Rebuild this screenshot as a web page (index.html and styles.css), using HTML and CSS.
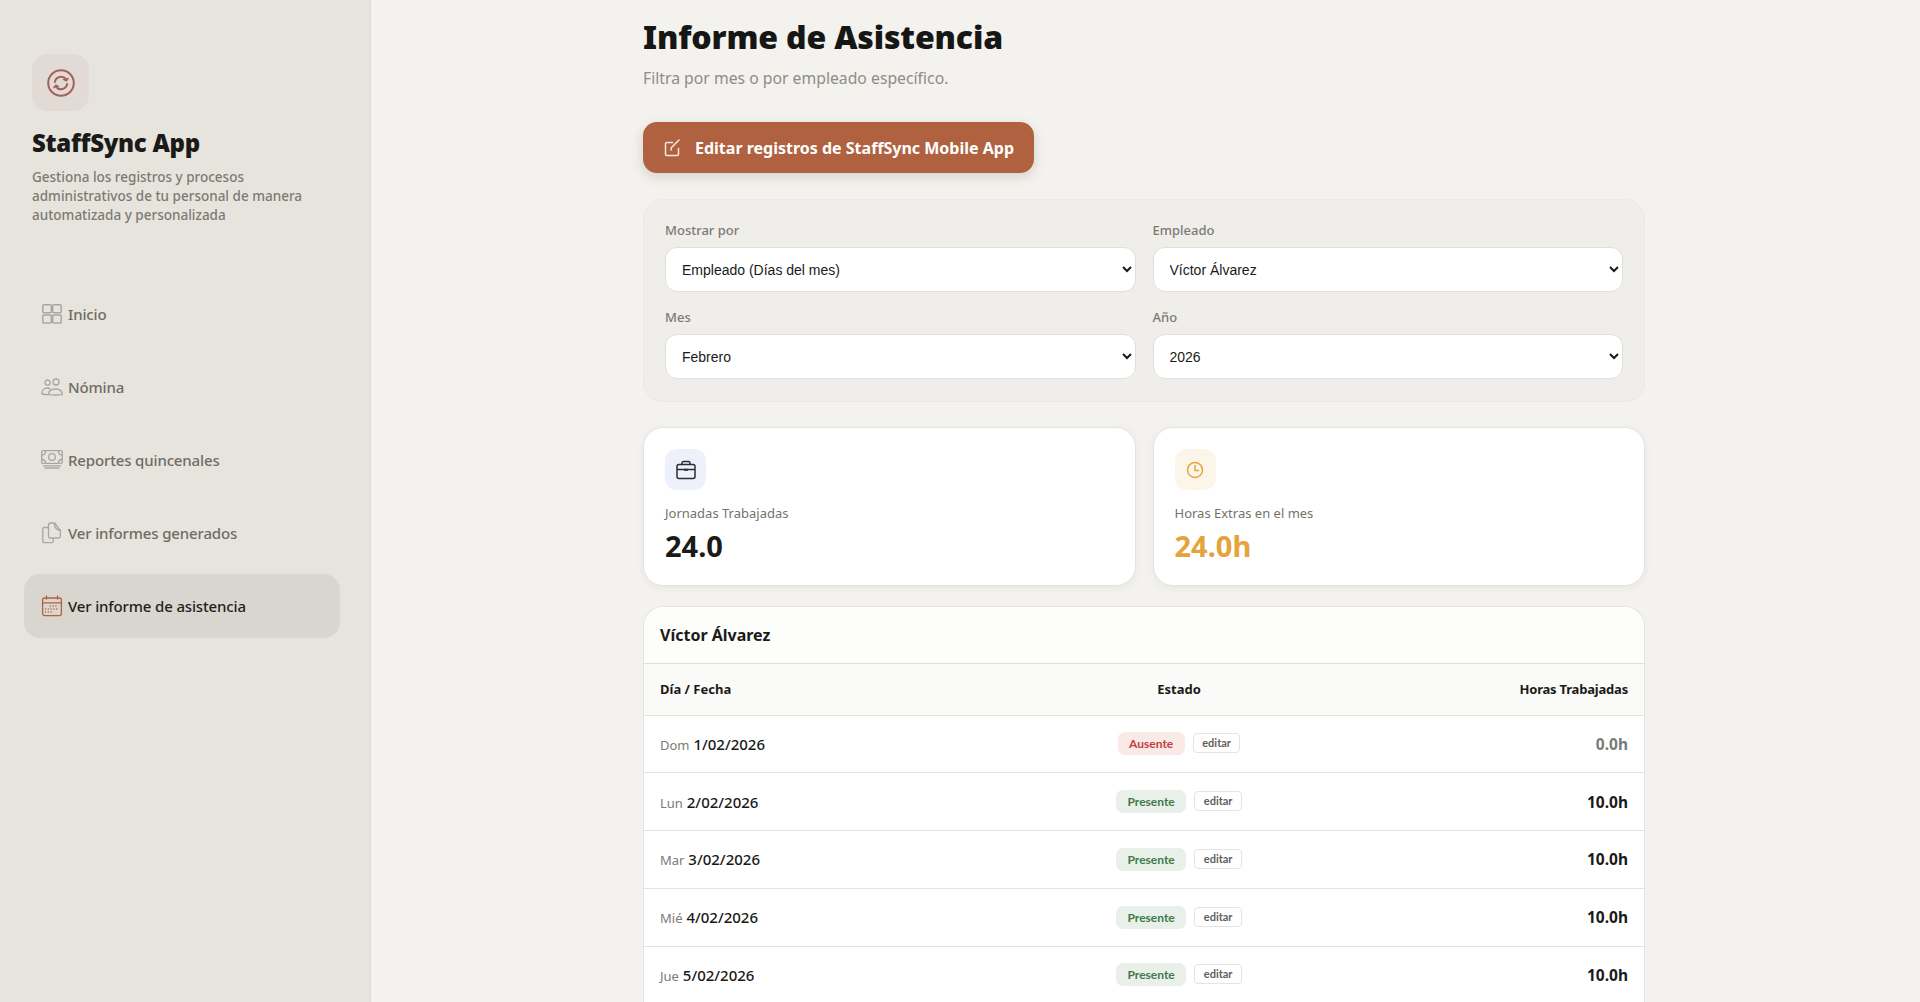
FILE: index.html
```html
<!DOCTYPE html>
<html lang="es">
<head>
<meta charset="utf-8">
<title>Informe de Asistencia</title>
<link rel="stylesheet" href="styles.css">
</head>
<body>
<div class="app">
  <aside class="sidebar">
    <div class="logo">
      <svg width="30" height="30" viewBox="0 0 30 30" fill="none" stroke="#a5605c" stroke-width="2" stroke-linecap="round" stroke-linejoin="round"><circle cx="15" cy="15" r="12.8"/><path d="M8.8 14a6.4 6.4 0 0 1 11.4-2.600"/><path d="M21.200 16a6.400 6.400 0 0 1-11.400 2.600"/><path d="M22 10.500l-1.800 2.300-2.600-1.400" stroke-width="1.600"/><path d="M8 19.500l1.800-2.300 2.600 1.400" stroke-width="1.600"/></svg>
    </div>
    <h2 class="brand">StaffSync App</h2>
    <p class="tagline">Gestiona los registros y procesos administrativos de tu personal de manera automatizada y personalizada</p>
    <nav class="nav">
      <a class="nav-item">
        <svg class="nav-icon" viewBox="0 0 22 22" fill="none" stroke="#a9a69f" stroke-width="1.500"><rect x="1.800" y="1.800" width="8.500" height="8" rx="1"/><rect x="11.700" y="1.800" width="8.500" height="8" rx="1"/><rect x="1.800" y="12" width="8.500" height="8" rx="1"/><rect x="11.700" y="12" width="8.500" height="8" rx="1"/></svg>
        <span>Inicio</span>
      </a>
      <a class="nav-item">
        <svg class="nav-icon" viewBox="0 0 22 22" fill="none" stroke="#a9a69f" stroke-width="1.300"><circle cx="6.600" cy="6.600" r="2.600"/><circle cx="15" cy="6" r="3"/><path d="M.8 18c0-3.600 2.400-6 5.400-6 1.200 0 2.200.3 3 .9"/><path d="M7.600 18.600c0-3.600 3-5.600 7-5.600s6.600 2 6.600 5.600c-4.400.5-9.200.5-13.600 0z"/><path d="M.8 18c1.800.5 4 .6 6.200.6"/></svg>
        <span>Nómina</span>
      </a>
      <a class="nav-item">
        <svg class="nav-icon" viewBox="0 0 22 22" fill="none" stroke="#a9a69f" stroke-width="1.300"><rect x=".7" y="1.700" width="20.600" height="12.600" rx="1.200"/><circle cx="11" cy="8" r="3.400"/><path d="M1 6c2 0 3.500-1.600 3.600-4M21 6c-2 0-3.500-1.600-3.600-4M1 10.500c2 0 3.500 1.500 3.600 3.500M21 10.500c-2 0-3.500 1.500-3.600 3.500"/><path d="M2 16.800h18M3.500 19h15"/></svg>
        <span>Reportes quincenales</span>
      </a>
      <a class="nav-item">
        <svg class="nav-icon" viewBox="0 0 22 22" fill="none" stroke="#a9a69f" stroke-width="1.300" stroke-linejoin="round"><path d="M7.500 5.500H3.200c-.8 0-1.400.6-1.400 1.400v12.400c0 .8.600 1.400 1.400 1.400h7.600c.8 0 1.400-.6 1.400-1.400V16"/><path d="M7.500 3v11.600c0 .8.600 1.400 1.400 1.400h9c.8 0 1.400-.6 1.400-1.400V8.500L13.500 1H9.500c-1 0-2 1-2 2z"/><path d="M13.500 1c-.4 3 .6 6.500 5.800 7.500"/></svg>
        <span>Ver informes generados</span>
      </a>
      <a class="nav-item active">
        <svg class="nav-icon" viewBox="0 0 22 22" fill="none" stroke="#b06240" stroke-width="1.300" stroke-linecap="round"><rect x="1.600" y="3" width="18.800" height="17.600" rx="2"/><path d="M1.600 7.800h18.800M5.500 1v3M16.500 1v3"/><path stroke-width="1.500" stroke-dasharray="0 2.800" d="M9.300 11h8M4.500 14h13M4.500 17h8"/></svg>
        <span>Ver informe de asistencia</span>
      </a>
    </nav>
  </aside>
  <main class="main">
    <div class="content">
      <h1 class="title">Informe de Asistencia</h1>
      <p class="subtitle">Filtra por mes o por empleado específico.</p>
      <a class="edit-btn">
        <svg width="18" height="18" viewBox="0 0 18 18" fill="none" stroke="#fff" stroke-opacity=".85" stroke-width="1.500" stroke-linecap="round" stroke-linejoin="round"><path d="M8.500 3.500H2.800C2 3.500 1.500 4 1.500 4.800v10.400c0 .8.500 1.300 1.300 1.300h10.400c.8 0 1.300-.5 1.300-1.300V9.500"/><path d="M7 11l.5-2.500L15 1"/></svg>
        <span>Editar registros de StaffSync Mobile App</span>
      </a>
      <section class="filters">
        <label class="field"><span class="field-label">Mostrar por</span>
          <select class="field-select"><option>Empleado (Días del mes)</option></select></label>
        <label class="field"><span class="field-label">Empleado</span>
          <select class="field-select"><option>Víctor Álvarez</option></select></label>
        <label class="field"><span class="field-label">Mes</span>
          <select class="field-select"><option>Febrero</option></select></label>
        <label class="field"><span class="field-label">Año</span>
          <select class="field-select"><option>2026</option></select></label>
      </section>
      <section class="stats">
        <div class="stat">
          <div class="stat-icon blue">
            <svg width="22" height="22" viewBox="0 0 22 22" fill="none" stroke="#2b2b33" stroke-width="1.500" stroke-linejoin="round"><rect x="2" y="5.500" width="18" height="14" rx="2"/><path d="M7 5.500V4c0-1 .6-1.600 1.600-1.600h4.800c1 0 1.600.6 1.600 1.600v1.500"/><path d="M2 10.500h18"/><path d="M9 10.800h4" stroke-width="2"/></svg>
          </div>
          <div class="stat-label">Jornadas Trabajadas</div>
          <div class="stat-value">24.0</div>
        </div>
        <div class="stat">
          <div class="stat-icon amber">
            <svg width="20" height="20" viewBox="0 0 20 20" fill="none" stroke="#e5a33b" stroke-width="1.500" stroke-linecap="round" stroke-linejoin="round"><circle cx="10" cy="10" r="7.500"/><path d="M10 5.500V10.500h3.500"/></svg>
          </div>
          <div class="stat-label">Horas Extras en el mes</div>
          <div class="stat-value amber-text">24.0h</div>
        </div>
      </section>
      <section class="report">
        <h3 class="report-title">Víctor Álvarez</h3>
        <table class="report-table">
          <thead>
            <tr><th class="col-day">Día / Fecha</th><th class="col-state">Estado</th><th class="col-hours">Horas Trabajadas</th></tr>
          </thead>
          <tbody>
            <tr><td class="col-day"><span class="dow">Dom</span> 1/02/2026</td><td class="col-state"><span class="badge absent">Ausente</span><span class="edit-tag">editar</span></td><td class="col-hours zero">0.0h</td></tr>
            <tr><td class="col-day"><span class="dow">Lun</span> 2/02/2026</td><td class="col-state"><span class="badge present">Presente</span><span class="edit-tag">editar</span></td><td class="col-hours">10.0h</td></tr>
            <tr><td class="col-day"><span class="dow">Mar</span> 3/02/2026</td><td class="col-state"><span class="badge present">Presente</span><span class="edit-tag">editar</span></td><td class="col-hours">10.0h</td></tr>
            <tr><td class="col-day"><span class="dow">Mié</span> 4/02/2026</td><td class="col-state"><span class="badge present">Presente</span><span class="edit-tag">editar</span></td><td class="col-hours">10.0h</td></tr>
            <tr><td class="col-day"><span class="dow">Jue</span> 5/02/2026</td><td class="col-state"><span class="badge present">Presente</span><span class="edit-tag">editar</span></td><td class="col-hours">10.0h</td></tr>
          </tbody>
        </table>
      </section>
    </div>
  </main>
</div>
</body>
</html>
```
FILE: styles.css
```css
* { box-sizing: border-box; }
html, body { margin: 0; height: 100%; overflow: hidden; }
body { font-family: "Noto Sans", "Open Sans", sans-serif; color: #1a1a18; background: #f3f2ee; }
.app { display: flex; height: 1002px; }

.sidebar { width: 371px; flex: none; background: #e7e4dd; border-right: 1px solid #dedbd4; padding: 54px 30px 0 24px; }
.logo { width: 57px; height: 57px; margin-left: 8px; border-radius: 16px; background: #e2dad5; display: flex; align-items: center; justify-content: center; }
.brand { margin: 16px 0 0 8px; font-size: 24px; line-height: 32px; font-weight: 900; letter-spacing: -.3px; color: #1a1a18; }
.tagline { margin: 9px 0 0 8px; width: 290px; font-size: 13.5px; line-height: 19px; font-weight: 500; color: #7d7a73; }
.nav { margin-top: 57px; display: flex; flex-direction: column; gap: 9px; }
.nav-item { height: 64px; display: flex; align-items: center; gap: 5px; padding-left: 17px; border-radius: 16px; font-size: 15px; letter-spacing: -.15px; font-weight: 500; color: #6f6c66; }
.nav-item.active { background: #d9d6cf; color: #1f1e1c; }
.nav-icon { width: 22px; height: 22px; flex: none; }

.main { flex: 1; min-width: 0; padding-right: 3px; }
.content { width: 1002px; margin: 0 auto; padding-top: 15px; }
.title { margin: 0; font-size: 32px; line-height: 44px; font-weight: 900; letter-spacing: -.15px; color: #161614; }
.subtitle { margin: 7px 0 0; font-size: 15.75px; line-height: 24px; color: #8f8c86; }
.edit-btn { margin-top: 32px; width: 391px; height: 51px; display: flex; align-items: center; gap: 13px; padding-left: 21px; border-radius: 14px; background: #b06240; color: #fff; font-size: 16px; font-weight: 700; box-shadow: 0 4px 12px rgba(90, 60, 40, .18); }

.filters { margin-top: 26px; padding: 20px 21px 22px; background: #efeeeb; border: 1px solid #ebe9e5; border-radius: 20px; display: grid; grid-template-columns: 1fr 1fr; gap: 15px 17px; }
.field { display: block; }
.field-label { display: block; font-size: 13px; line-height: 20px; font-weight: 500; color: #7d7a73; margin-bottom: 7px; }
.field-select { display: block; width: 100%; height: 45px; padding: 0 10px 0 12px; border: 1px solid #e0dfdb; border-radius: 12px; background: #fff; font-family: "Liberation Sans", Arial, sans-serif; font-size: 14px; color: #1a1a18; }

.stats { margin-top: 25px; display: grid; grid-template-columns: 1fr 1fr; gap: 17px; }
.stat { height: 159px; padding: 21px; background: #fff; border: 1px solid #e5e4e0; border-radius: 20px; box-shadow: 0 2px 8px rgba(0, 0, 0, .05); }
.stat-icon { width: 41px; height: 41px; border-radius: 12px; display: flex; align-items: center; justify-content: center; }
.stat-icon.blue { background: #eef1fb; }
.stat-icon.amber { background: #fcf6ea; }
.stat-label { margin-top: 13px; font-size: 13px; line-height: 20px; color: #75726c; }
.stat-value { margin-top: 2px; font-size: 29px; line-height: 42px; font-weight: 700; color: #1a1a18; }
.amber-text { color: #e5a33b; }

.report { margin-top: 20px; background: #fff; border: 1px solid #e5e4e0; border-radius: 20px 20px 0 0; border-bottom: 0; }
.report-title { margin: 0; height: 57px; padding: 0 16px; display: flex; align-items: center; font-size: 16px; font-weight: 700; color: #1a1a18; background: #fdfdfc; border-radius: 20px 20px 0 0; border-bottom: 1px solid #e0dfdb; }
.report-table { width: 100%; border-collapse: collapse; table-layout: fixed; }
.report-table th { height: 51px; font-size: 13px; font-weight: 700; color: #1a1a18; background: #fafaf9; border-bottom: 1px solid #e3e2de; }
.report-table th.col-hours { letter-spacing: -.2px; }
.report-table td { height: 57.75px; font-size: 15px; font-weight: 500; border-bottom: 1px solid #e3e2de; }
.col-day { width: 407px; padding-left: 16px; text-align: left; }
.col-state { width: 256px; text-align: center; }
.col-hours { padding-right: 16px; text-align: right; }
.report-table td.col-hours { font-size: 15.5px; font-weight: 700; }
.report-table td.zero { color: #7a7a78; }
.dow { font-size: 13px; font-weight: 400; color: #7d7a73; }
.badge { display: inline-block; padding: 0 11.5px; height: 23px; line-height: 23px; border-radius: 7px; font-family: Lato, sans-serif; font-size: 12px; font-weight: 700; }
.badge.absent { background: #f9e9e7; color: #bf4141; }
.badge.present { background: #e9f0e9; color: #3f7a4a; }
.edit-tag { display: inline-block; margin-left: 8px; padding: 0 8.500px; height: 20px; line-height: 18px; border: 1px solid #e5e4e0; border-radius: 4px; background: #fff; font-family: Lato, sans-serif; font-size: 11px; font-weight: 700; color: #5f5f5d; vertical-align: 1px; }
```
